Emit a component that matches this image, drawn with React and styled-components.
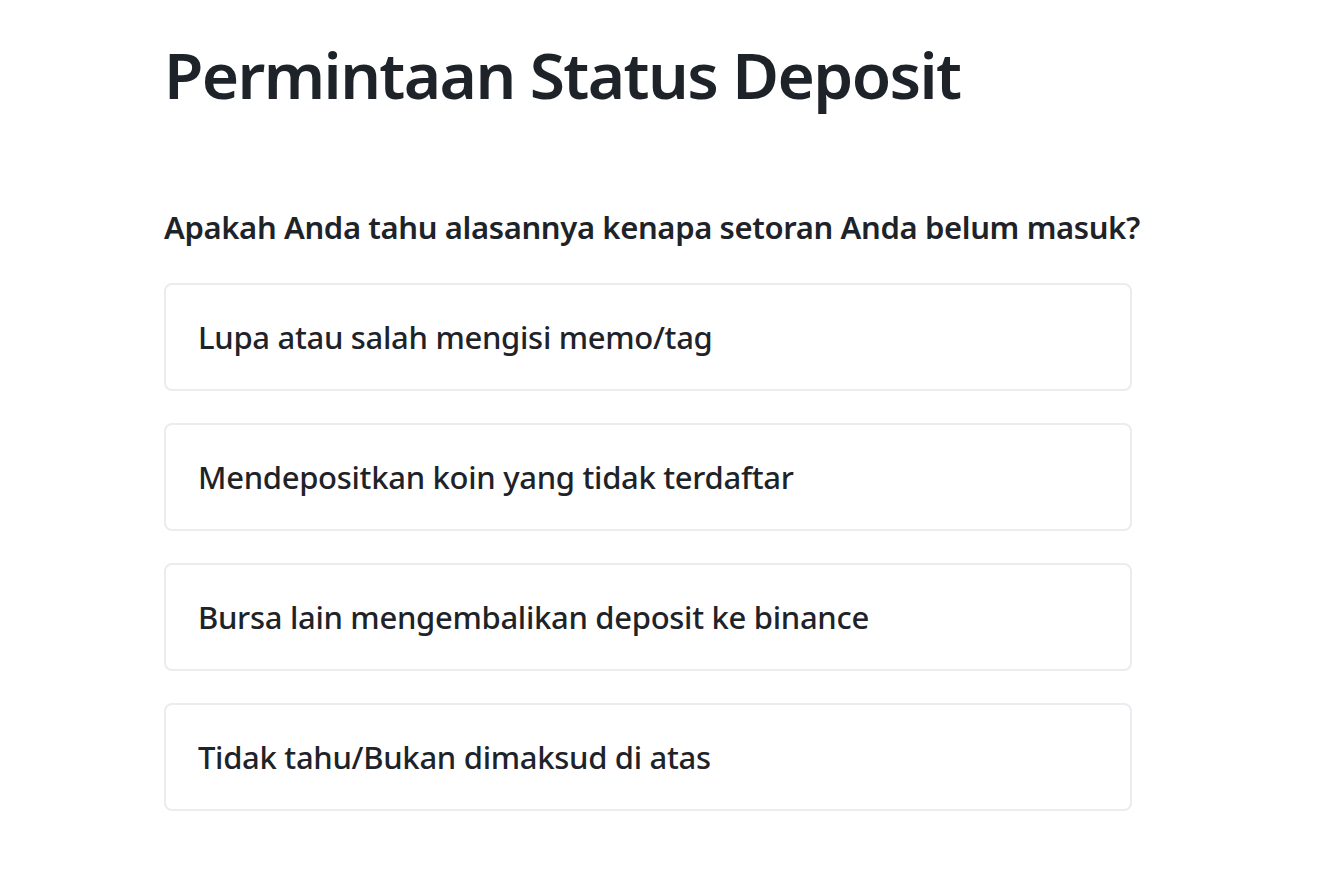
import styled, { createGlobalStyle } from 'styled-components';

const GlobalStyle = createGlobalStyle`
  body {
    margin: 0;
    background: #ffffff;
    font-family: "Noto Sans", "Liberation Sans", sans-serif;
    color: #1e2329;
  }
`;

const reasons = [
  'Lupa atau salah mengisi memo/tag',
  'Mendepositkan koin yang tidak terdaftar',
  'Bursa lain mengembalikan deposit ke binance',
  'Tidak tahu/Bukan dimaksud di atas',
];

export default function App() {
  return (
    <>
      <GlobalStyle />
      <Page>
        <Title>Permintaan Status Deposit</Title>
        <Question>Apakah Anda tahu alasannya kenapa setoran Anda belum masuk?</Question>
        <OptionList>
          {reasons.map((text) => (
            <Option key={text}>{text}</Option>
          ))}
        </OptionList>
      </Page>
    </>
  );
}

const Page = styled.main`
  width: 968px;
  padding: 37px 0 0 164px;
`;

const Title = styled.h1`
  margin: 0;
  font-size: 64px;
  line-height: 76px;
  font-weight: 600;
  letter-spacing: -1.6px;
`;

const Question = styled.h2`
  margin: 94px 0 0;
  font-size: 31px;
  line-height: 40px;
  font-weight: 600;
  letter-spacing: -0.37px;
  white-space: nowrap;
`;

const OptionList = styled.div`
  display: flex;
  flex-direction: column;
  gap: 32px;
  margin-top: 36px;
`;

const Option = styled.button`
  display: flex;
  align-items: center;
  box-sizing: border-box;
  width: 100%;
  height: 108px;
  padding: 0 32px;
  background: #ffffff;
  border: 2px solid #eaecef;
  border-radius: 8px;
  font-family: inherit;
  font-size: 31px;
  font-weight: 500;
  letter-spacing: -0.3px;
  color: #1e2329;
  text-align: left;
  cursor: pointer;
  &:hover {
    border-color: #f0b90b;
  }
`;
